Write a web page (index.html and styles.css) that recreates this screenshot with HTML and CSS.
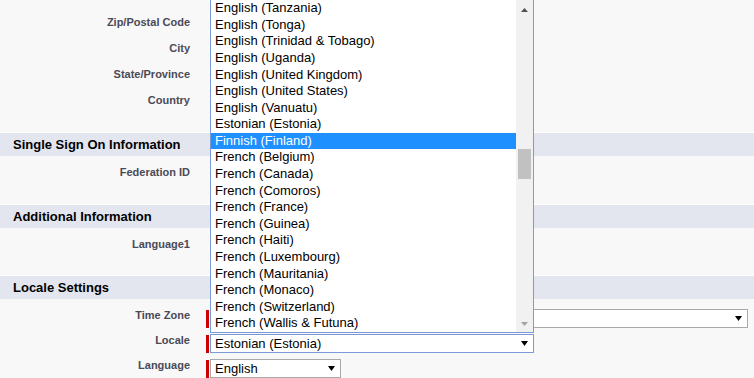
FILE: index.html
```html
<!DOCTYPE html>
<html lang="en">
<head>
    <meta charset="UTF-8">
    <meta name="viewport" content="width=device-width, initial-scale=1.0">
    <title>User Edit</title>
    <link rel="stylesheet" href="styles.css">
</head>
<body>
    <div class="fields">
        <div class="row"><div class="label">Zip/Postal Code</div><div class="data"></div></div>
        <div class="row"><div class="label">City</div><div class="data"></div></div>
        <div class="row"><div class="label">State/Province</div><div class="data"></div></div>
        <div class="row"><div class="label">Country</div><div class="data"></div></div>
    </div>

    <div class="subheader"><h3>Single Sign On Information</h3></div>
    <div class="fields">
        <div class="row"><div class="label">Federation ID</div><div class="data"></div></div>
    </div>

    <div class="subheader"><h3>Additional Information</h3></div>
    <div class="fields fields-short">
        <div class="row"><div class="label">Language1</div><div class="data"></div></div>
    </div>

    <div class="subheader"><h3>Locale Settings</h3></div>
    <div class="fields locale">
        <div class="row">
            <div class="label">Time Zone</div>
            <div class="data">
                <span class="required"></span>
                <div class="select select-wide">
                    <span></span>
                    <svg class="arrow" width="7" height="5" viewBox="0 0 7 5"><polygon points="0,0 7,0 3.5,5" fill="#000"/></svg>
                </div>
            </div>
        </div>
        <div class="row">
            <div class="label">Locale</div>
            <div class="data">
                <span class="required"></span>
                <div class="combo">
                    <div class="select select-focus">
                        <span>Estonian (Estonia)</span>
                        <svg class="arrow" width="7" height="5" viewBox="0 0 7 5"><polygon points="0,0 7,0 3.5,5" fill="#000"/></svg>
                    </div>
                    <div class="dropdown">
                        <div class="options">
                            <div class="option">English (Tanzania)</div>
                            <div class="option">English (Tonga)</div>
                            <div class="option">English (Trinidad &amp; Tobago)</div>
                            <div class="option">English (Uganda)</div>
                            <div class="option">English (United Kingdom)</div>
                            <div class="option">English (United States)</div>
                            <div class="option">English (Vanuatu)</div>
                            <div class="option">Estonian (Estonia)</div>
                            <div class="option selected">Finnish (Finland)</div>
                            <div class="option">French (Belgium)</div>
                            <div class="option">French (Canada)</div>
                            <div class="option">French (Comoros)</div>
                            <div class="option">French (France)</div>
                            <div class="option">French (Guinea)</div>
                            <div class="option">French (Haiti)</div>
                            <div class="option">French (Luxembourg)</div>
                            <div class="option">French (Mauritania)</div>
                            <div class="option">French (Monaco)</div>
                            <div class="option">French (Switzerland)</div>
                            <div class="option">French (Wallis &amp; Futuna)</div>
                        </div>
                        <div class="scrollbar">
                            <div class="sb-btn sb-up">
                                <svg width="7" height="4" viewBox="0 0 7 4"><polygon points="3.5,0 7,4 0,4" fill="#505050"/></svg>
                            </div>
                            <div class="sb-track"><div class="sb-thumb"></div></div>
                            <div class="sb-btn">
                                <svg width="7" height="4" viewBox="0 0 7 4"><polygon points="0,0 7,0 3.5,4" fill="#a3a3a3"/></svg>
                            </div>
                        </div>
                    </div>
                </div>
            </div>
        </div>
        <div class="row">
            <div class="label">Language</div>
            <div class="data">
                <span class="required"></span>
                <div class="select select-small">
                    <span>English</span>
                    <svg class="arrow" width="7" height="5" viewBox="0 0 7 5"><polygon points="0,0 7,0 3.5,5" fill="#000"/></svg>
                </div>
            </div>
        </div>
    </div>
</body>
</html>
```

FILE: styles.css
```css
body {
    margin: 0;
    height: 378px;
    overflow: hidden;
    background-color: #f8f8f8;
    font-family: "Liberation Sans", Arial, sans-serif;
}

.fields {
    padding: 14px 0;
}

.subheader + .fields {
    padding-top: 8px;
}

.fields-short {
    padding-bottom: 13px;
}

.row {
    display: flex;
    height: 26px;
}

.locale .row {
    height: 25px;
}

.label {
    width: 190px;
    flex-shrink: 0;
    padding-top: 2px;
    text-align: right;
    font-size: 11px;
    line-height: 13px;
    font-weight: bold;
    color: #4a4a56;
}

.data {
    display: flex;
    margin-left: 16px;
    margin-top: 2px;
    align-items: flex-start;
}

.subheader {
    height: 23px;
    border-top: 1px solid #fff;
    background: #e3e6ef;
}

.subheader h3 {
    margin: 0;
    padding-left: 13px;
    font-size: 13px;
    line-height: 23px;
    font-weight: bold;
    color: #000;
}

.required {
    width: 3px;
    height: 18px;
    margin-top: 1px;
    margin-right: 1px;
    background: #c00;
}

.select {
    box-sizing: border-box;
    height: 19px;
    display: flex;
    align-items: center;
    justify-content: space-between;
    padding: 0 5px 0 4px;
    border: 1px solid #a9a9a9;
    background: #fff;
    font-size: 13px;
    color: #000;
}

.select-wide {
    width: 538px;
}

.select-small {
    width: 131px;
}

.select-focus {
    width: 324px;
    border-color: #7b9bd8;
}

.combo {
    position: relative;
}

.dropdown {
    position: absolute;
    left: 0;
    bottom: calc(100% + 1px);
    width: 324px;
    box-sizing: border-box;
    display: flex;
    border: 1px solid #7b9bd8;
    background: #fff;
}

.options {
    flex: 1;
}

.option {
    height: 16.6px;
    line-height: 16.6px;
    padding-left: 4px;
    font-size: 13px;
    color: #000;
    white-space: nowrap;
}

.option.selected {
    background: #1e90ff;
    color: #fff;
}

.scrollbar {
    width: 17px;
    display: flex;
    flex-direction: column;
    background: #f1f1f1;
}

.sb-btn {
    height: 17px;
    display: flex;
    align-items: center;
    justify-content: center;
}

.sb-up {
    padding-top: 3px;
    box-sizing: border-box;
}

.sb-track {
    flex: 1;
}

.sb-thumb {
    height: 30px;
    margin: 132px 2px 0;
    background: #c1c1c1;
}
```
